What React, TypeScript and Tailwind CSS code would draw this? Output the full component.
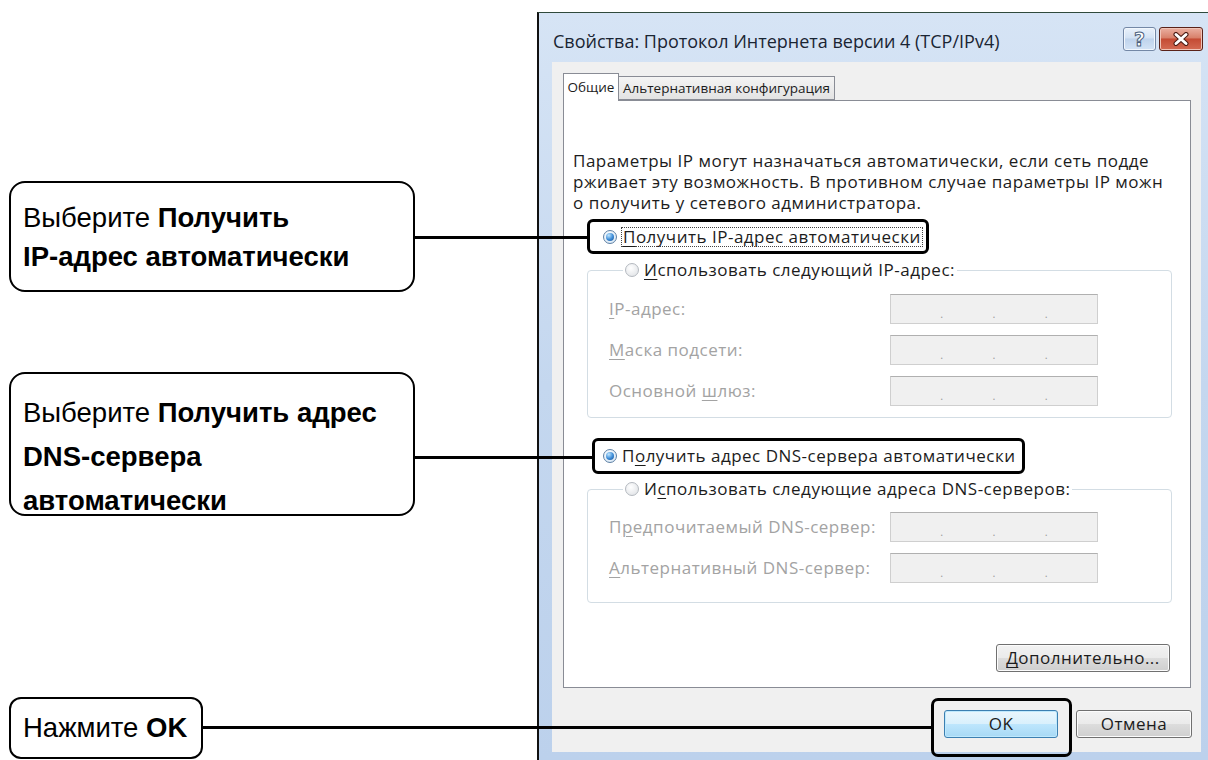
import React from "react";

function Radio({ checked }: { checked?: boolean }) {
  return (
    <span
      className={
        checked
          ? "w-[14px] h-[14px] shrink-0 rounded-full border border-[#5d7fa3] bg-[radial-gradient(circle_at_40%_35%,#ffffff,#cfe3f4)] flex items-center justify-center"
          : "w-[14px] h-[14px] shrink-0 rounded-full border border-[#b4b9bf] bg-[radial-gradient(circle_at_40%_35%,#ffffff,#dcdfe3)] flex items-center justify-center"
      }
    >
      {checked && (
        <span className="w-[8px] h-[8px] rounded-full bg-[radial-gradient(circle_at_35%_30%,#bfe6ff,#3a8ad6_55%,#1b4f8e)]" />
      )}
    </span>
  );
}

function U({ children }: { children: React.ReactNode }) {
  return <span className="underline underline-offset-[3px] decoration-1">{children}</span>;
}

function IpField() {
  return (
    <div className="w-[208px] h-[30px] border border-[#cfcfcf] border-t-[#b0b0b0] bg-[#f0f0f0] flex justify-evenly items-center pt-[8px] text-[#9a9a9a] text-[11px] leading-none tracking-normal">
      <span>.</span>
      <span>.</span>
      <span>.</span>
    </div>
  );
}

function FieldRow({ label }: { label: React.ReactNode }) {
  return (
    <div className="flex items-center h-[30px]">
      <div className="w-[281px] text-[#a3a3a3] whitespace-nowrap">{label}</div>
      <IpField />
    </div>
  );
}

function Dialog() {
  return (
    <div className="mt-[12px] flex-1 h-[748px] flex flex-col border-l-2 border-t border-l-[#111] border-t-[#2f4a3c] bg-linear-to-b from-[#d6e4f5] via-[#c4d7ef] to-[#bcd1ec] pl-[13px] pr-[7px] pb-[8px] font-['Open_Sans','Noto_Sans',sans-serif] text-[#1c1c1c]">
      {/* title bar */}
      <div className="h-[49px] flex items-start shrink-0">
        <div className="mt-[17px] ml-[1px] text-[18px] leading-[22px] text-[#1a2533] whitespace-nowrap">
          Свойства: Протокол Интернета версии 4 (TCP/IPv4)
        </div>
        <div className="ml-auto mt-[14px] -mr-[2px] flex gap-[3px]">
          <div className="w-[33px] h-[24px] rounded-[3px] border border-[#7488a6] bg-[linear-gradient(#eaf2fb,#d3e2f4_45%,#bfd3ec_50%,#d4e4f6)] shadow-[inset_0_0_0_1px_#f2f7fd] flex items-center justify-center text-[19px] font-bold leading-none text-white [-webkit-text-stroke:1px_#4c5f7c] font-['DejaVu_Sans',sans-serif]">
            ?
          </div>
          <div className="w-[44px] h-[24px] rounded-[3px] border border-[#5a2219] bg-[linear-gradient(#eab0a2,#d8806a_45%,#c44b34_50%,#d46b53)] shadow-[inset_0_0_0_1px_#f0c4b8] flex items-center justify-center">
            <svg width="18" height="14" viewBox="0 0 18 14">
              <path d="M4 2.5 L14 11.5 M14 2.5 L4 11.5" stroke="#4a1a12" strokeWidth="5" strokeLinecap="round" />
              <path d="M4 2.5 L14 11.5 M14 2.5 L4 11.5" stroke="#ffffff" strokeWidth="3" strokeLinecap="round" />
            </svg>
          </div>
        </div>
      </div>

      {/* client area */}
      <div className="flex-1 flex flex-col bg-[#f0f0f0] pt-[11px] text-[17px] leading-[20px] tracking-[0.5px]">
        {/* tabs */}
        <div className="ml-[11px] h-[27px] flex items-end relative z-10 text-[13.5px] tracking-normal whitespace-nowrap">
          <div className="w-[56px] h-[28px] -mb-px bg-white border border-[#898c95] border-b-0 flex items-center justify-center pb-[2px]">
            Общие
          </div>
          <div className="w-[216px] h-[24px] bg-linear-to-b from-[#f4f4f4] to-[#e3e3e3] border border-l-0 border-[#898c95] flex items-center justify-center">
            Альтернативная конфигурация
          </div>
        </div>

        {/* panel */}
        <div className="ml-[11px] mr-[10px] h-[588px] bg-white border border-[#898c95] flex flex-col">
          <div className="pt-[49px] pl-[9px] whitespace-nowrap leading-[21px]">
            <div>Параметры IP могут назначаться автоматически, если сеть подде</div>
            <div>рживает эту возможность. В противном случае параметры IP можн</div>
            <div>о получить у сетевого администратора.</div>
          </div>

          {/* radio 1 */}
          <div className="mt-[14px] ml-[39px] w-fit relative flex items-center h-[20px] whitespace-nowrap">
            <Radio checked />
            <span className="ml-[4px] px-[1px] border border-dotted border-[#444] leading-[18px]">
              <U>П</U>олучить IP-адрес автоматически
            </span>
            <div className="absolute -left-[16px] -right-[6px] -top-[8px] -bottom-[7px] border-[3px] border-black rounded-[6px]" />
          </div>

          {/* group 1 */}
          <fieldset className="mt-[13px] ml-[23px] mr-[18px] border border-[#d3dde4] rounded-[4px] pl-[21px] pt-[14px] pb-[11px] flex flex-col gap-[11px]">
            <legend className="ml-[14px] px-[2px] flex items-center h-[20px] text-[#1c1c1c] whitespace-nowrap">
              <Radio />
              <span className="ml-[5px]">
                <U>И</U>спользовать следующий IP-адрес:
              </span>
            </legend>
            <FieldRow label={<><U>I</U>P-адрес:</>} />
            <FieldRow label={<><U>М</U>аска подсети:</>} />
            <FieldRow label={<>Основной <U>ш</U>люз:</>} />
          </fieldset>

          {/* radio 2 */}
          <div className="mt-[28px] ml-[39px] w-fit relative flex items-center h-[20px] whitespace-nowrap">
            <Radio checked />
            <span className="ml-[5px]">
              П<U>о</U>лучить адрес DNS-сервера автоматически
            </span>
            <div className="absolute -left-[11px] -right-[9px] -top-[8px] -bottom-[8px] border-[3px] border-black rounded-[6px]" />
          </div>

          {/* group 2 */}
          <fieldset className="mt-[13px] ml-[23px] mr-[18px] border border-[#d3dde4] rounded-[4px] pl-[21px] pt-[13px] pb-[19px] flex flex-col gap-[11px]">
            <legend className="ml-[14px] px-[2px] flex items-center h-[20px] text-[#1c1c1c] whitespace-nowrap">
              <Radio />
              <span className="ml-[5px]">
                И<U>с</U>пользовать следующие адреса DNS-серверов:
              </span>
            </legend>
            <FieldRow label={<>П<U>р</U>едпочитаемый DNS-сервер:</>} />
            <FieldRow label={<><U>А</U>льтернативный DNS-сервер:</>} />
          </fieldset>

          <div className="mt-auto mb-[15px] mr-[20px] self-end w-[174px] h-[28px] rounded-[3px] border border-[#707070] bg-[linear-gradient(#f2f2f2,#ebebeb_50%,#dddddd_50%,#cfcfcf)] shadow-[inset_0_0_0_1px_#fcfcfc] flex items-center justify-center whitespace-nowrap">
            <span>
              <U>Д</U>ополнительно...
            </span>
          </div>
        </div>

        {/* bottom buttons */}
        <div className="mt-[22px] mr-[9px] flex justify-end gap-[18px]">
          <div className="relative w-[114px] h-[28px] rounded-[3px] border border-[#3c7fb1] bg-[linear-gradient(#eaf6fd,#d9f0fc_50%,#bee6fd_50%,#a7d9f5)] shadow-[inset_0_0_0_1px_#bfe9fd] flex items-center justify-center">
            OK
            <div className="absolute -left-[14px] -right-[15px] -top-[13px] -bottom-[20px] border-[3px] border-black rounded-[7px]" />
          </div>
          <div className="w-[116px] h-[28px] rounded-[3px] border border-[#707070] bg-[linear-gradient(#f2f2f2,#ebebeb_50%,#dddddd_50%,#cfcfcf)] shadow-[inset_0_0_0_1px_#fcfcfc] flex items-center justify-center">
            Отмена
          </div>
        </div>
      </div>
    </div>
  );
}

export default function App() {
  return (
    <div className="relative w-[1208px] h-[760px] overflow-hidden bg-white flex font-['Liberation_Sans',Arial,sans-serif] text-black">
      <div className="w-[537px] shrink-0 flex flex-col pl-[9px] text-[27.5px] whitespace-nowrap">
        <div className="mt-[181px] w-[406px] h-[111px] border-2 border-black rounded-[16px] flex flex-col justify-center pl-[12px] leading-[39px]">
          <div>
            Выберите <b>Получить</b>
          </div>
          <div>
            <b>IP-адрес автоматически</b>
          </div>
        </div>
        <div className="mt-[80px] w-[406px] h-[144px] border-2 border-black rounded-[16px] flex flex-col pt-[17px] pl-[12px] leading-[44px]">
          <div>
            Выберите <b>Получить адрес</b>
          </div>
          <div>
            <b>DNS-сервера</b>
          </div>
          <div>
            <b>автоматически</b>
          </div>
        </div>
        <div className="mt-[181px] w-[194px] h-[62px] border-2 border-black rounded-[12px] flex items-center pl-[12px]">
          <span>
            Нажмите <b>OK</b>
          </span>
        </div>
      </div>
      <Dialog />
      <div className="absolute left-[415px] top-[236px] w-[172px] h-[3px] bg-black" />
      <div className="absolute left-[415px] top-[456px] w-[177px] h-[3px] bg-black" />
      <div className="absolute left-[203px] top-[726px] w-[728px] h-[3px] bg-black" />
    </div>
  );
}
